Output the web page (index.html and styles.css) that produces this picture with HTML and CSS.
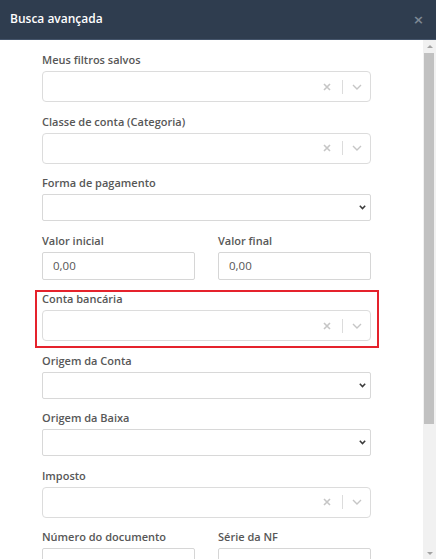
FILE: index.html
```html
<!DOCTYPE html>
<html lang="pt-BR">
<head>
<meta charset="utf-8">
<title>Busca avançada</title>
<link rel="stylesheet" href="styles.css">
</head>
<body>
<div class="modal">
  <header class="modal-header">
    <h1 class="modal-title">Busca avançada</h1>
    <span class="modal-close">×</span>
  </header>
  <div class="modal-body">
    <div class="scroll-content">
      <form class="form">
        <div class="group">
          <label class="label">Meus filtros salvos</label>
          <div class="rselect">
            <div class="rselect-value"></div>
            <div class="rselect-ind">
              <svg class="ic-clear" width="8" height="8" viewBox="0 0 8 8"><path d="M1 1L7 7M7 1L1 7" stroke="#c6c6c6" stroke-width="1.6" fill="none"/></svg>
              <span class="rselect-sep"></span>
              <svg class="ic-chev" width="10" height="6" viewBox="0 0 10 6"><path d="M1 1L5 5L9 1" stroke="#c6c6c6" stroke-width="1.4" fill="none"/></svg>
            </div>
          </div>
        </div>

        <div class="group">
          <label class="label">Classe de conta (Categoria)</label>
          <div class="rselect">
            <div class="rselect-value"></div>
            <div class="rselect-ind">
              <svg class="ic-clear" width="8" height="8" viewBox="0 0 8 8"><path d="M1 1L7 7M7 1L1 7" stroke="#c6c6c6" stroke-width="1.6" fill="none"/></svg>
              <span class="rselect-sep"></span>
              <svg class="ic-chev" width="10" height="6" viewBox="0 0 10 6"><path d="M1 1L5 5L9 1" stroke="#c6c6c6" stroke-width="1.4" fill="none"/></svg>
            </div>
          </div>
        </div>

        <div class="group">
          <label class="label">Forma de pagamento</label>
          <div class="nselect">
            <svg width="7" height="5" viewBox="0 0 7 5"><path d="M0.8 0.8L3.5 3.6L6.2 0.8" stroke="#3a3a3a" stroke-width="1.5" fill="none"/></svg>
          </div>
        </div>

        <div class="row">
          <div class="group">
            <label class="label">Valor inicial</label>
            <input class="tinput" type="text" value="0,00">
          </div>
          <div class="group">
            <label class="label">Valor final</label>
            <input class="tinput" type="text" value="0,00">
          </div>
        </div>

        <div class="group highlighted">
          <label class="label">Conta bancária</label>
          <div class="rselect">
            <div class="rselect-value"></div>
            <div class="rselect-ind">
              <svg class="ic-clear" width="8" height="8" viewBox="0 0 8 8"><path d="M1 1L7 7M7 1L1 7" stroke="#c6c6c6" stroke-width="1.6" fill="none"/></svg>
              <span class="rselect-sep"></span>
              <svg class="ic-chev" width="10" height="6" viewBox="0 0 10 6"><path d="M1 1L5 5L9 1" stroke="#c6c6c6" stroke-width="1.4" fill="none"/></svg>
            </div>
          </div>
        </div>

        <div class="group">
          <label class="label">Origem da Conta</label>
          <div class="nselect">
            <svg width="7" height="5" viewBox="0 0 7 5"><path d="M0.8 0.8L3.5 3.6L6.2 0.8" stroke="#3a3a3a" stroke-width="1.5" fill="none"/></svg>
          </div>
        </div>

        <div class="group">
          <label class="label">Origem da Baixa</label>
          <div class="nselect">
            <svg width="7" height="5" viewBox="0 0 7 5"><path d="M0.8 0.8L3.5 3.6L6.2 0.8" stroke="#3a3a3a" stroke-width="1.5" fill="none"/></svg>
          </div>
        </div>

        <div class="group">
          <label class="label">Imposto</label>
          <div class="rselect">
            <div class="rselect-value"></div>
            <div class="rselect-ind">
              <svg class="ic-clear" width="8" height="8" viewBox="0 0 8 8"><path d="M1 1L7 7M7 1L1 7" stroke="#c6c6c6" stroke-width="1.6" fill="none"/></svg>
              <span class="rselect-sep"></span>
              <svg class="ic-chev" width="10" height="6" viewBox="0 0 10 6"><path d="M1 1L5 5L9 1" stroke="#c6c6c6" stroke-width="1.4" fill="none"/></svg>
            </div>
          </div>
        </div>

        <div class="row">
          <div class="group">
            <label class="label">Número do documento</label>
            <input class="tinput" type="text" value="">
          </div>
          <div class="group">
            <label class="label">Série da NF</label>
            <input class="tinput" type="text" value="">
          </div>
        </div>
      </form>
    </div>
    <div class="scrollbar">
      <div class="sb-btn"><span class="tri-up"></span></div>
      <div class="sb-track"><div class="sb-thumb"></div></div>
      <div class="sb-btn"><span class="tri-down"></span></div>
    </div>
  </div>
</div>
</body>
</html>
```

FILE: styles.css
```css
* { box-sizing: border-box; }

html, body {
  margin: 0;
  padding: 0;
  width: 436px;
  height: 559px;
  overflow: hidden;
  background: #ffffff;
  font-family: "Open Sans", "Liberation Sans", sans-serif;
}

.modal {
  width: 436px;
  height: 559px;
  display: flex;
  flex-direction: column;
}

.modal-header {
  height: 40px;
  flex: 0 0 40px;
  background: #2f3d4f;
  border-bottom: 1px solid #44546a;
  display: flex;
  align-items: center;
  justify-content: space-between;
  padding: 0 12px 1px 10px;
}

.modal-title {
  margin: 0;
  color: #ffffff;
  font-size: 12px;
  font-weight: 600;
  line-height: 16px;
}

.modal-close {
  color: #7d8894;
  font-size: 13px;
  font-weight: 700;
  line-height: 13px;
  font-family: "DejaVu Sans", sans-serif;
}

.modal-body {
  flex: 1;
  display: flex;
  min-height: 0;
}

.scroll-content {
  flex: 1;
  overflow: hidden;
  padding: 12px 52px 0 42px;
}

.form {
  display: flex;
  flex-direction: column;
}

.group {
  display: flex;
  flex-direction: column;
  margin-bottom: 11.5px;
}

.row {
  display: grid;
  grid-template-columns: 153px 153px;
  column-gap: 23px;
}

.label {
  color: #575757;
  font-size: 11px;
  font-weight: 600;
  line-height: 15px;
  margin-bottom: 4px;
}

.rselect {
  height: 31px;
  border: 1px solid #dcdcdc;
  border-radius: 4px;
  display: flex;
  align-items: center;
  background: #fff;
}

.rselect-value { flex: 1; }

.rselect-ind {
  display: flex;
  align-items: center;
  padding-right: 8px;
}

.ic-clear { display: block; }

.rselect-sep {
  width: 1px;
  height: 14px;
  background: #dcdcdc;
  margin: 0 9px 0 11px;
}

.ic-chev { display: block; }

.nselect {
  height: 27px;
  border: 1px solid #d8d8d8;
  border-radius: 2px;
  display: flex;
  align-items: center;
  justify-content: flex-end;
  padding-right: 4px;
  background: #fff;
}

.nselect svg { display: block; }

.tinput {
  height: 28px;
  width: 100%;
  border: 1px solid #d6d6d6;
  border-radius: 2px;
  padding: 0 0 0 10px;
  margin: 0;
  font-family: "Open Sans", "Liberation Sans", sans-serif;
  font-size: 11.5px;
  color: #555;
  background: #fff;
  outline: none;
}

.highlighted { position: relative; }

.highlighted::after {
  content: "";
  position: absolute;
  top: -1px;
  left: -7px;
  right: -8px;
  bottom: -7px;
  border: 2px solid #e5222c;
  pointer-events: none;
}

.scrollbar {
  width: 13px;
  flex: 0 0 13px;
  background: #f1f1f1;
  display: flex;
  flex-direction: column;
}

.sb-btn {
  height: 12px;
  flex: 0 0 12px;
  display: flex;
  align-items: center;
  justify-content: center;
}

.tri-up {
  width: 0;
  height: 0;
  border-left: 3px solid transparent;
  border-right: 3px solid transparent;
  border-bottom: 3px solid #a3a3a3;
}

.tri-down {
  width: 0;
  height: 0;
  border-left: 3px solid transparent;
  border-right: 3px solid transparent;
  border-top: 3px solid #a3a3a3;
}

.sb-track {
  flex: 1;
  padding: 1px 2px 0 1px;
}

.sb-thumb {
  height: 371px;
  background: #c1c1c1;
}
```
